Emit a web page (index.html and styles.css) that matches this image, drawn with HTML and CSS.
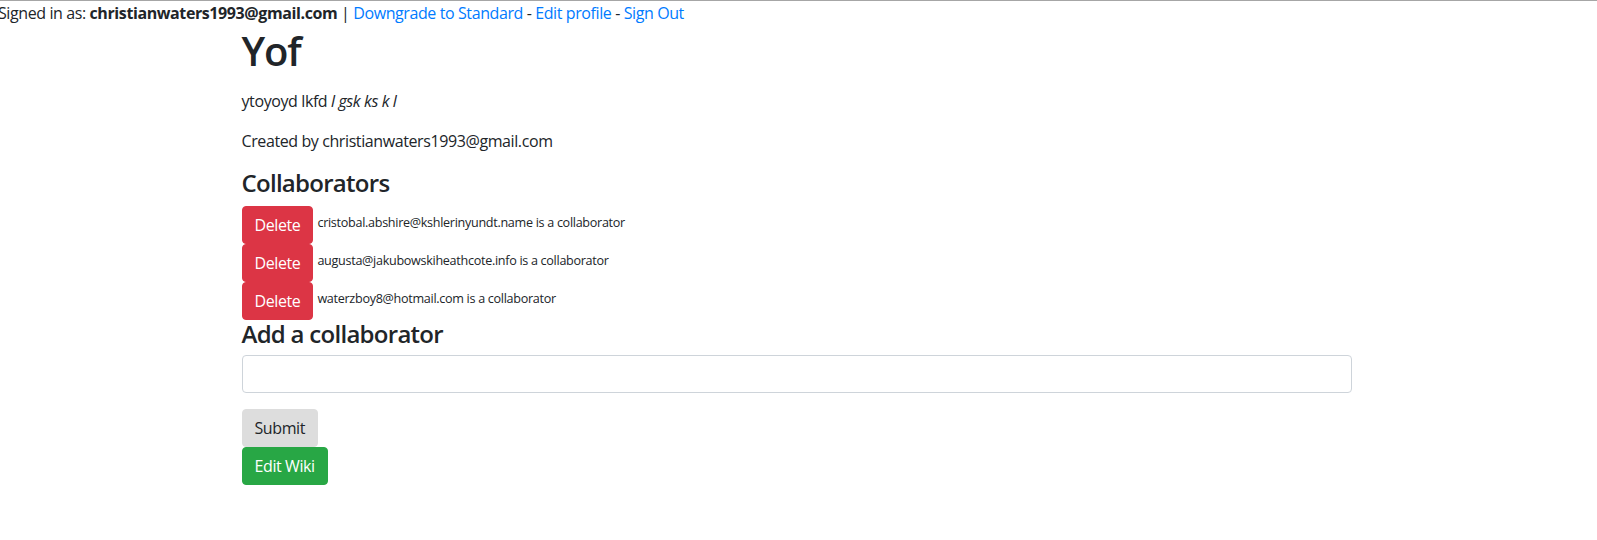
FILE: index.html
```html
<!DOCTYPE html>
<html lang="en">
<head>
<meta charset="utf-8">
<title>Yof</title>
<link rel="stylesheet" href="styles.css">
</head>
<body>
<div class="topbar">Signed in as: <strong>christianwaters1993@gmail.com</strong> | <a href="#">Downgrade to Standard</a> - <a href="#">Edit profile</a> - <a href="#">Sign Out</a></div>
<main class="container">
  <h1 class="title">Yof</h1>
  <p>ytoyoyd lkfd <em>l gsk ks k l</em></p>
  <p>Created by christianwaters1993@gmail.com</p>
  <h4 class="heading">Collaborators</h4>
  <div class="collab"><button class="btn btn-danger">Delete</button><small>cristobal.abshire@kshlerinyundt.name is a collaborator</small></div>
  <div class="collab"><button class="btn btn-danger">Delete</button><small>augusta@jakubowskiheathcote.info is a collaborator</small></div>
  <div class="collab"><button class="btn btn-danger">Delete</button><small>waterzboy8@hotmail.com is a collaborator</small></div>
  <h4 class="heading">Add a collaborator</h4>
  <form class="add-form">
    <div class="form-group"><input class="form-control" type="text"></div>
    <button class="btn btn-submit" type="submit">Submit</button>
  </form>
  <a class="btn btn-success" href="#">Edit Wiki</a>
</main>
</body>
</html>
```
FILE: styles.css
```css
html, body {
  margin: 0;
  padding: 0;
}
body {
  font-family: "Open Sans", "Noto Sans", sans-serif;
  font-size: 16px;
  line-height: 24px;
  letter-spacing: -0.4px;
  color: #212529;
  background: #fff;
  border-top: 1px solid #a6a6a6;
}
a {
  color: #007bff;
  text-decoration: none;
}
.topbar {
  margin-left: -2px;
  white-space: nowrap;
}
.topbar strong {
  font-weight: 700;
}
.container {
  max-width: 1110px;
  margin: 0 auto;
  padding: 0 17px 0 13px;
}
.title {
  font-size: 40px;
  font-weight: 600;
  line-height: 48px;
  letter-spacing: -0.03em;
  margin: 2px 0 14px;
}
p {
  margin: 0 0 16px;
}
.heading {
  font-size: 24px;
  font-weight: 600;
  line-height: 28.8px;
  letter-spacing: -0.03em;
  margin: 0 0 8px;
}
.collab {
  display: flex;
  align-items: flex-start;
  gap: 4px;
}
.collab small {
  display: block;
  font-size: 12.6px;
  line-height: 19px;
  letter-spacing: -0.3px;
  padding-top: 7px;
}
.btn {
  display: inline-block;
  font-family: inherit;
  font-size: 16px;
  line-height: 24px;
  letter-spacing: -0.4px;
  padding: 6px 12px;
  border: 1px solid transparent;
  border-radius: 4px;
  cursor: pointer;
  text-align: center;
}
.btn-danger {
  background: #dc3545;
  border-color: #dc3545;
  color: #fff;
}
.btn-submit {
  background: #dddddd;
  border-color: #dddddd;
  color: #212529;
}
.btn-success {
  background: #28a745;
  border-color: #28a745;
  color: #fff;
}
.add-form {
  margin: 0;
}
.form-group {
  margin-bottom: 16px;
}
.form-control {
  display: block;
  box-sizing: border-box;
  width: 100%;
  height: 38px;
  margin-top: -2px;
  padding: 6px 12px;
  font-family: inherit;
  font-size: 16px;
  border: 1px solid #ced4da;
  border-radius: 4px;
  background: #fff;
}
```
